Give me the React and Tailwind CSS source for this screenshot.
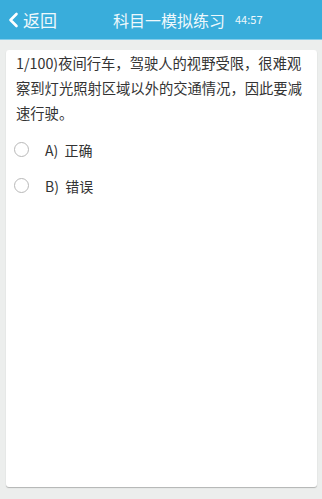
export default function App() {
  const font = { fontFamily: '"Noto Sans CJK SC", "Noto Sans", sans-serif' };
  return (
    <div className="w-[322px] h-[499px] flex flex-col bg-[#eceeed]" style={font}>
      <div className="h-[39px] bg-[#39addb] flex items-center relative shrink-0">
        <div className="flex items-center pl-[8px] text-white">
          <svg width="11" height="16" viewBox="0 0 11 16" className="mr-[4px]">
            <path d="M8.5 2 L2.5 8 L8.5 14" fill="none" stroke="white" strokeWidth="2.6" strokeLinecap="round" strokeLinejoin="round" />
          </svg>
          <span className="text-[17px] leading-none text-[#eef8fc]">返回</span>
        </div>
        <div className="absolute left-[113px] top-0 h-full flex items-center text-[#eef8fc]">
          <span className="text-[16px] leading-none">科目一模拟练习</span>
          <span className="text-[11px] leading-none ml-[10px]">44:57</span>
        </div>
      </div>
      <div className="h-px bg-[#86cdea] shrink-0" />
      <div className="flex-1 pt-[10px] pb-[12px] pl-[6px] pr-[5px] flex">
        <div className="flex-1 bg-white rounded-[3px] shadow-[0_1px_1px_rgba(0,0,0,0.25)] px-[10px]">
          <p className="text-[14.3px] leading-[25px] text-[#333]">
            1/100)夜间行车，驾驶人的视野受限，很难观察到灯光照射区域以外的交通情况，因此要减速行驶。
          </p>
          <div className="mt-[17px] flex flex-col gap-[21px]">
            {["A)  正确", "B)  错误"].map((t) => (
              <div key={t} className="flex items-center h-[15px]">
                <div className="w-[15px] h-[15px] rounded-full border border-[#b8b8b8] ml-[-2px]" />
                <span className="ml-[16px] text-[14px] leading-none text-[#333] whitespace-pre">{t}</span>
              </div>
            ))}
          </div>
        </div>
      </div>
    </div>
  );
}
